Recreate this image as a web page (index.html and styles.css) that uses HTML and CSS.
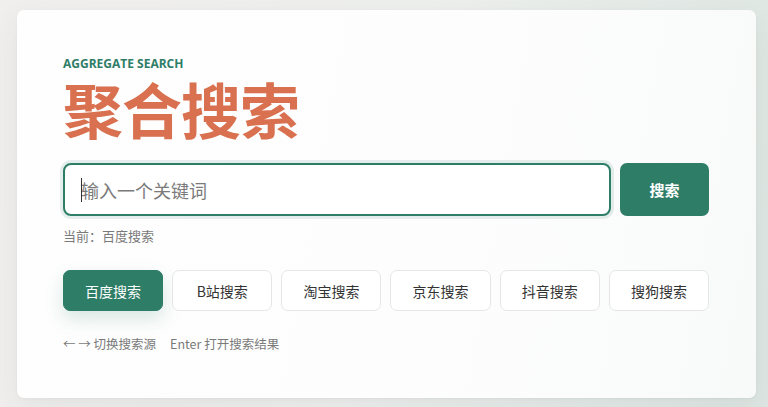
FILE: index.html
```html
<!DOCTYPE html>
<html lang="zh-CN">
<head>
<meta charset="utf-8">
<title>聚合搜索</title>
<link rel="stylesheet" href="styles.css">
</head>
<body>
<main class="card">
  <div class="eyebrow">AGGREGATE SEARCH</div>
  <h1 class="title">聚合搜索</h1>
  <div class="search-row">
    <div class="input-wrap"><span class="caret"></span><input class="search-input" type="text" placeholder="输入一个关键词"></div>
    <button class="search-btn">搜索</button>
  </div>
  <div class="current">当前：百度搜索</div>
  <div class="sources">
    <button class="source active">百度搜索</button>
    <button class="source">B站搜索</button>
    <button class="source">淘宝搜索</button>
    <button class="source">京东搜索</button>
    <button class="source">抖音搜索</button>
    <button class="source">搜狗搜索</button>
  </div>
  <div class="hint"><span>← → 切换搜索源</span><span>Enter 打开搜索结果</span></div>
</main>
</body>
</html>
```
FILE: styles.css
```css
* { box-sizing: border-box; }
html, body { height: 100%; }
body {
  margin: 0;
  padding: 10px 12px 9px 17px;
  background: linear-gradient(100deg, #f1efed 0%, #eef0ee 50%, #dde6e2 100%);
  font-family: "Noto Sans", "Noto Sans CJK SC", sans-serif;
  color: #333;
}
.card {
  height: 388px;
  background: linear-gradient(100deg, #fefefe 0%, #fdfdfd 60%, #f8faf9 100%);
  border-radius: 7px;
  box-shadow: 0 10px 30px rgba(40, 60, 50, 0.07), 0 1px 3px rgba(0,0,0,0.04);
  padding: 46px 47px 0 46px;
}
.eyebrow {
  font-family: "Open Sans", "Noto Sans", sans-serif;
  font-size: 12px;
  font-weight: 700;
  line-height: 16px;
  color: #2e7d67;
}
.title {
  margin: 4px 0 0;
  font-family: "Noto Sans CJK SC", sans-serif;
  font-size: 60px;
  font-weight: 700;
  line-height: 64px;
  letter-spacing: -1px;
  color: #d9704f;
}
.search-row {
  display: flex;
  gap: 9px;
  margin-top: 23px;
}
.input-wrap {
  flex: 1;
  position: relative;
  height: 53px;
  border: 2px solid #2e7d67;
  border-radius: 8px;
  background: #fff;
  box-shadow: 0 0 0 3px rgba(46, 125, 103, 0.12);
}
.caret {
  position: absolute;
  left: 16px;
  top: 13px;
  width: 1px;
  height: 24px;
  background: #333;
}
.search-input {
  width: 100%;
  height: 100%;
  border: 0;
  outline: 0;
  background: transparent;
  padding: 0 16px;
  font-family: "Noto Sans CJK SC", sans-serif;
  font-size: 18px;
  color: #333;
}
.search-input::placeholder { color: #7a7a7a; }
.search-btn {
  width: 89px;
  height: 53px;
  border: 0;
  border-radius: 7px;
  background: #2e7d67;
  color: #fff;
  font-family: "Noto Sans CJK SC", sans-serif;
  font-size: 15px;
  font-weight: 700;
}
.current {
  margin-top: 11px;
  font-family: "Noto Sans CJK SC", sans-serif;
  font-size: 13px;
  line-height: 18px;
  color: #7a7a7a;
}
.sources {
  display: grid;
  grid-template-columns: repeat(6, 1fr);
  gap: 9px;
  margin-top: 25px;
}
.source {
  height: 41px;
  border: 1px solid #e5e7e6;
  border-radius: 7px;
  background: #fff;
  font-family: "Noto Sans CJK SC", sans-serif;
  font-size: 14px;
  color: #333;
}
.source.active {
  background: #2e7d67;
  border-color: #2e7d67;
  color: #fff;
  box-shadow: 0 8px 18px rgba(46, 125, 103, 0.18);
}
.hint {
  margin-top: 24px;
  display: flex;
  gap: 14px;
  font-family: "Noto Sans CJK SC", sans-serif;
  font-size: 12.5px;
  line-height: 18px;
  color: #7a7a7a;
}
```
